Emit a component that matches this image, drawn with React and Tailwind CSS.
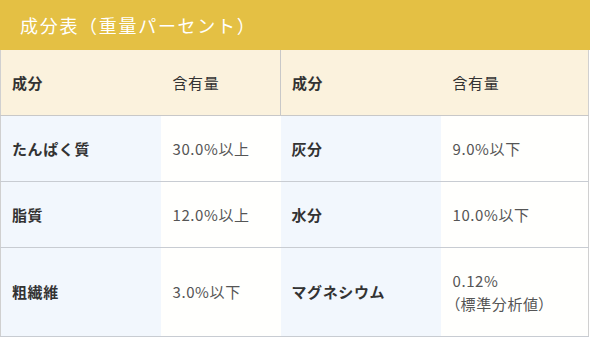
import React from 'react';

const rows = [
  [{ name: 'たんぱく質', value: '30.0%以上' }, { name: '灰分', value: '9.0%以下' }],
  [{ name: '脂質', value: '12.0%以上' }, { name: '水分', value: '10.0%以下' }],
  [{ name: '粗繊維', value: '3.0%以下' }, { name: 'マグネシウム', value: ['0.12%', '（標準分析値）'] }],
];

export default function App() {
  return (
    <div
      className="w-[590px] h-[337px] bg-white overflow-hidden"
      style={{ fontFamily: '"Noto Sans CJK JP", "Noto Sans", sans-serif' }}
    >
      <div className="h-[50px] bg-[#e4c044] flex items-center pl-5 text-white text-[18px] tracking-[1.7px]">
        成分表（重量パーセント）
      </div>
      <table className="w-[589px] border-collapse border-r border-b border-l border-[#d0d0d0] text-[15px] leading-[23px] tracking-[0.6px]">
        <colgroup>
          <col className="w-[160px]" />
          <col className="w-[120px]" />
          <col className="w-[160px]" />
          <col />
        </colgroup>
        <thead>
          <tr className="h-[65px] bg-[#fbf2dd] border-b border-[#c8c8c8]">
            <th className="text-left font-bold text-[#333] pl-[11px]">成分</th>
            <th className="text-left font-normal text-[#333] pl-3 border-r border-[#c8c8c8]">含有量</th>
            <th className="text-left font-bold text-[#333] pl-[11px]">成分</th>
            <th className="text-left font-normal text-[#333] pl-3">含有量</th>
          </tr>
        </thead>
        <tbody>
          {rows.map((row, i) => (
            <tr key={i} className="border-b border-[#c8ccd2]">
              {row.map((cell, j) => (
                <React.Fragment key={j}>
                  <td className="bg-[#f2f7fd] font-bold text-[#333] pl-[11px] py-[21px]">{cell.name}</td>
                  <td className="bg-[#fffffd] text-[#555] pl-3 py-[21px]">
                    {Array.isArray(cell.value)
                      ? cell.value.map((v, k) => (
                          <div key={k} className="[font-feature-settings:'palt']">{v}</div>
                        ))
                      : cell.value}
                  </td>
                </React.Fragment>
              ))}
            </tr>
          ))}
        </tbody>
      </table>
    </div>
  );
}
